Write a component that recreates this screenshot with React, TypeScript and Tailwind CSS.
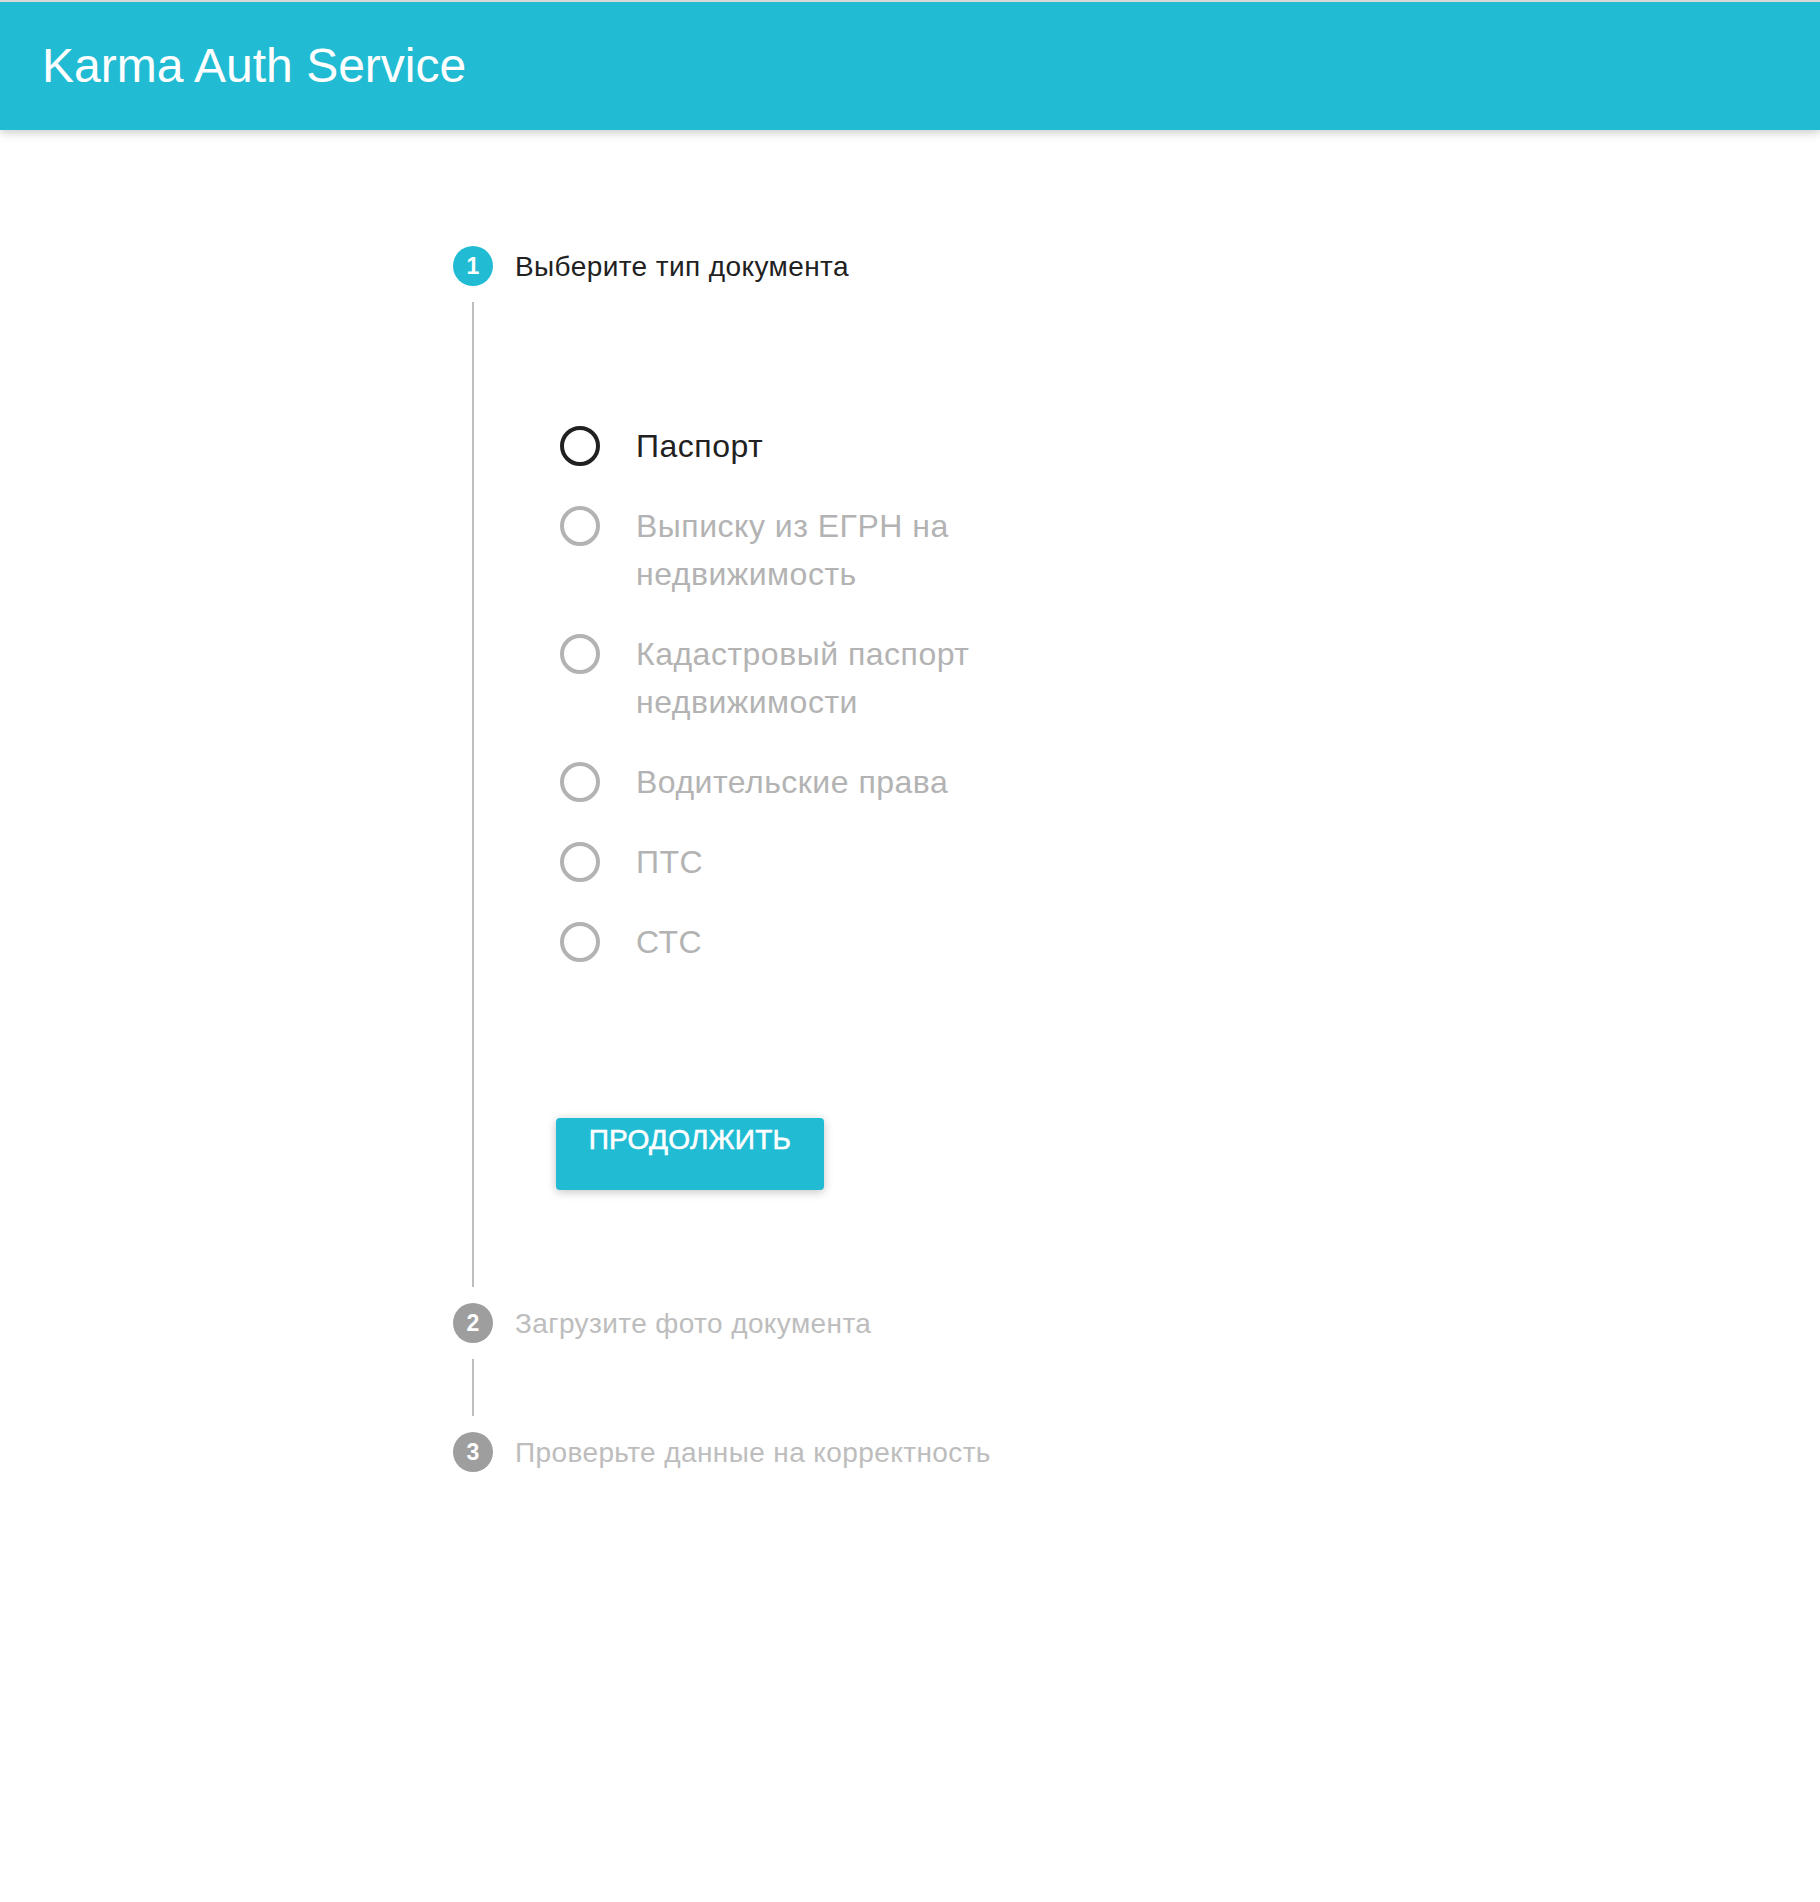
import React from 'react';

const documentTypes = [
  'Паспорт',
  'Выписку из ЕГРН на недвижимость',
  'Кадастровый паспорт недвижимости',
  'Водительские права',
  'ПТС',
  'СТС',
];

function StepIcon({ n, active }: { n: number; active?: boolean }) {
  return (
    <div
      className={`flex h-10 w-10 shrink-0 items-center justify-center rounded-full text-[23px] font-bold text-white ${
        active ? 'bg-[#21bcd4]' : 'bg-[#9e9e9e]'
      }`}
    >
      {n}
    </div>
  );
}

function StepHeader({ n, label, active }: { n: number; label: string; active?: boolean }) {
  return (
    <div className="flex h-10 items-center">
      <StepIcon n={n} active={active} />
      <span
        className={`ml-[22px] pt-[2px] text-[28px] tracking-[0.4px] ${active ? 'text-[#212121]' : 'text-[#bdbdbd]'}`}
      >
        {label}
      </span>
    </div>
  );
}

function Connector({ children }: { children?: React.ReactNode }) {
  return (
    <div className="flex">
      {/* vertical line */}
      <div className="flex w-10 shrink-0 justify-center py-4">
        <div className="w-[2px] bg-[#bdbdbd]" />
      </div>
      <div className="flex-1">{children}</div>
    </div>
  );
}

function Radio({ label, checked }: { label: string; checked?: boolean }) {
  return (
    <label className="flex cursor-pointer items-start">
      <svg width="48" height="48" viewBox="0 0 48 48" className="shrink-0">
        <circle
          cx="24"
          cy="24"
          r="18"
          fill="none"
          strokeWidth="4"
          stroke={checked ? '#212121' : '#b3b3b3'}
        />
      </svg>
      <span
        className={`ml-8 w-[410px] text-[32px] leading-[48px] tracking-[0.5px] ${
          checked ? 'text-[#212121]' : 'text-[#b3b3b3]'
        }`}
      >
        {label}
      </span>
    </label>
  );
}

export default function App() {
  return (
    <div className="min-h-[1902px] bg-white font-['Liberation_Sans',Arial,sans-serif]">
      {/* App bar */}
      <header className="flex h-[130px] items-center border-t-2 border-[#d9d9d9] bg-[#21bcd4] pl-[42px] shadow-[0_2px_12px_rgba(0,0,0,0.12),0_2px_8px_rgba(0,0,0,0.12)]">
        <h1 className="text-[48px] text-white">Karma Auth Service</h1>
      </header>

      {/* Stepper */}
      <main className="mx-auto w-[914px] pt-[116px]">
        <StepHeader n={1} label="Выберите тип документа" active />
        <Connector>
          <div className="pb-[113px] pl-[63px] pt-[136px]">
            <div className="flex flex-col gap-8">
              {documentTypes.map((t, i) => (
                <Radio key={t} label={t} checked={i === 0} />
              ))}
            </div>
            <button className="mt-[152px] flex h-[72px] w-[268px] items-start justify-center rounded-[4px] bg-[#21bcd4] text-[28px] font-medium uppercase text-white shadow-[0_2px_12px_rgba(0,0,0,0.12),0_2px_8px_rgba(0,0,0,0.12)]">
              <span className="leading-[44px] tracking-[0.3px] [-webkit-text-stroke:0.6px_white]">Продолжить</span>
            </button>
          </div>
        </Connector>

        <StepHeader n={2} label="Загрузите фото документа" />
        <Connector>
          <div className="h-[89px]" />
        </Connector>
        <StepHeader n={3} label="Проверьте данные на корректность" />
      </main>
    </div>
  );
}
